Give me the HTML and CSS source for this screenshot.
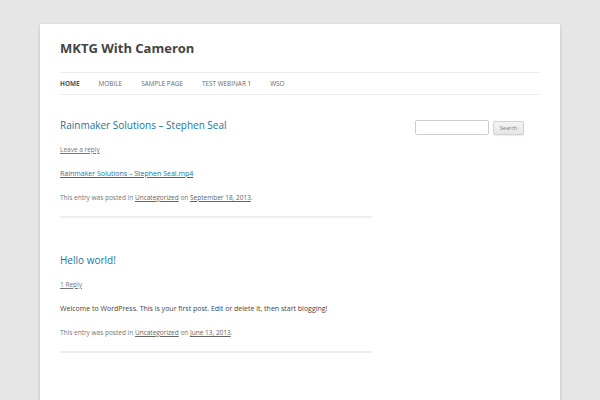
FILE: index.html
```html
<!DOCTYPE html>
<html>
<head>
    <title>MKTG With Cameron</title>
    <link rel="stylesheet" href="styles.css">
</head>
<body>
    <div class="site">
        <header class="site-header">
            <h1 class="site-title"><a href="#">MKTG With Cameron</a></h1>
            <nav class="main-nav">
                <ul>
                    <li class="current"><a href="#">Home</a></li>
                    <li><a href="#">Mobile</a></li>
                    <li><a href="#">Sample Page</a></li>
                    <li><a href="#">Test Webinar 1</a></li>
                    <li><a href="#">WSO</a></li>
                </ul>
            </nav>
        </header>

        <div class="main">
            <div class="content">
                <article class="post">
                    <header class="entry-header">
                        <h1 class="entry-title"><a href="#">Rainmaker Solutions &ndash; Stephen Seal</a></h1>
                        <div class="comments-link"><a href="#">Leave a reply</a></div>
                    </header>
                    <div class="entry-content">
                        <p><a href="#">Rainmaker Solutions &ndash; Stephen Seal.mp4</a></p>
                    </div>
                    <footer class="entry-meta">
                        This entry was posted in <a href="#">Uncategorized</a> on <a href="#">September 18, 2013</a>.
                    </footer>
                </article>

                <article class="post">
                    <header class="entry-header">
                        <h1 class="entry-title"><a href="#">Hello world!</a></h1>
                        <div class="comments-link"><a href="#">1 Reply</a></div>
                    </header>
                    <div class="entry-content">
                        <p>Welcome to WordPress. This is your first post. Edit or delete it, then start blogging!</p>
                    </div>
                    <footer class="entry-meta">
                        This entry was posted in <a href="#">Uncategorized</a> on <a href="#">June 13, 2013</a>.
                    </footer>
                </article>
            </div>

            <aside class="widget-area">
                <form class="search-form">
                    <input type="text" class="search-input">
                    <button type="button" class="search-btn">Search</button>
                </form>
            </aside>
        </div>
    </div>
</body>
</html>
```

FILE: styles.css
```css
body {
    margin: 0;
    background-color: #e6e6e6;
    font-family: "Open Sans", "DejaVu Sans", sans-serif;
    font-size: 7px;
    color: #444;
}

a {
    color: #21759b;
}

.site {
    max-width: 480px;
    margin: 24px auto;
    padding: 0 20px 40px;
    background-color: #fff;
    box-shadow: 0 1px 3px rgba(100, 100, 100, .3);
}

.site-header {
    padding: 12px 0;
}

.site-title {
    margin: 0;
    font-size: 13px;
    line-height: 24px;
    font-weight: bold;
}

.site-title a {
    color: #444;
    text-decoration: none;
}

.main-nav {
    margin-top: 12px;
    border-top: 1px solid #ededed;
    border-bottom: 1px solid #ededed;
}

.main-nav ul {
    display: flex;
    gap: 19px;
    margin: 0;
    padding: 0;
    list-style: none;
}

.main-nav a {
    display: block;
    font-size: 6.4px;
    line-height: 21px;
    text-transform: uppercase;
    text-decoration: none;
    color: #6a6a6a;
}

.main-nav .current a {
    color: #555;
    font-weight: bold;
}

.main {
    display: flex;
    justify-content: space-between;
    align-items: flex-start;
}

.content {
    width: 312px;
    margin-top: 12px;
}

.post {
    padding-bottom: 12px;
    margin-bottom: 36px;
    border-bottom: 2px solid #eee;
}

.entry-header {
    margin-bottom: 12px;
}

.entry-title {
    margin: 0;
    font-size: 10px;
    line-height: 12px;
    font-weight: normal;
}

.entry-title a {
    text-decoration: none;
}

.comments-link {
    margin-top: 12px;
    padding-top: 1px;
    font-size: 6.5px;
    line-height: 12px;
}

.comments-link a {
    color: #757575;
}

.entry-content p {
    margin: 0 0 12px;
    line-height: 12px;
}

.entry-meta {
    font-size: 6.5px;
    line-height: 12px;
    color: #757575;
}

.entry-meta a {
    color: #666;
}

.widget-area {
    width: 125px;
    margin-top: 12px;
}

.search-form {
    display: flex;
    align-items: center;
    gap: 4px;
    padding-top: 1px;
}

.search-input {
    box-sizing: border-box;
    width: 74px;
    height: 15px;
    padding: 3px;
    border: 1px solid #ccc;
    border-radius: 2px;
    font-size: 6.5px;
}

.search-btn {
    box-sizing: border-box;
    width: 31px;
    height: 14px;
    padding: 0;
    font-family: inherit;
    font-size: 5.5px;
    color: #7c7c7c;
    background-color: #e6e6e6;
    background-image: linear-gradient(to bottom, #f4f4f4, #e6e6e6);
    border: 1px solid #d2d2d2;
    border-radius: 2px;
    box-shadow: 0 1px 1px rgba(64, 64, 64, .1);
}
```
